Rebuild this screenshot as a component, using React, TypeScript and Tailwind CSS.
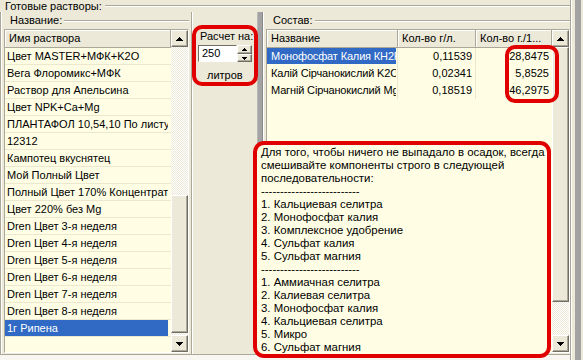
import React from "react";

const listItems = [
  "Цвет MASTER+МФК+K2O",
  "Вега Флоромикс+МФК",
  "Раствор для Апельсина",
  "Цвет NPK+Ca+Mg",
  "ПЛАНТАФОЛ 10,54,10 По листу",
  "12312",
  "Кампотец вкуснятец",
  "Мой Полный Цвет",
  "Полный Цвет 170% Концентрат",
  "Цвет 220% без Mg",
  "Dren Цвет 3-я неделя",
  "Dren Цвет 4-я неделя",
  "Dren Цвет 5-я неделя",
  "Dren Цвет 6-я неделя",
  "Dren Цвет 7-я неделя",
  "Dren Цвет 8-я неделя",
  "1г Рипена",
];

const rows = [
  { name: "Монофосфат Калия КН2РО4", a: "0,11539", b: "28,8475" },
  { name: "Калій Сірчанокислий K2O", a: "0,02341", b: "5,8525" },
  { name: "Магній Сірчанокислий Mg", a: "0,18519", b: "46,2975" },
];

const tip = `Для того, чтобы ничего не выпадало в осадок, всегда
смешивайте компоненты строго в следующей
последовательности:
--------------------------
1. Кальциевая селитра
2. Монофосфат калия
3. Комплексное удобрение
4. Сульфат калия
5. Сульфат магния
--------------------------
1. Аммиачная селитра
2. Калиевая селитра
3. Монофосфат калия
4. Кальциевая селитра
5. Микро
6. Сульфат магния`;

function Arrow({ dir, w = 7 }: { dir: "up" | "down"; w?: number }) {
  const h = Math.ceil(w / 2);
  return (
    <svg width={w} height={h} viewBox={`0 0 ${w} ${h}`} shapeRendering="crispEdges">
      <polygon
        points={dir === "up" ? `0,${h} ${w / 2},0 ${w},${h}` : `0,0 ${w},0 ${w / 2},${h}`}
        fill="#000"
      />
    </svg>
  );
}

const raised =
  "bg-[#ece9d8] border border-t-white border-l-white border-r-[#716f64] border-b-[#716f64] shadow-[inset_-1px_-1px_0_#aca899]";
const dither =
  "[background-image:repeating-conic-gradient(#ffffff_0%_25%,#ece9d8_0%_50%)] [background-size:2px_2px]";

function SBtn({ dir }: { dir: "up" | "down" }) {
  return (
    <div className={`h-[17px] shrink-0 flex items-center justify-center ${raised}`}>
      <Arrow dir={dir} />
    </div>
  );
}

function Header({ children, w, grow }: { children: React.ReactNode; w?: string; grow?: boolean }) {
  return (
    <div
      className={`${w ?? ""} ${grow ? "flex-1" : "shrink-0"} h-[18px] leading-[17px] pl-[4px] bg-[#ece9d8] border-r border-b border-r-[#aca899] border-b-[#aca899] shadow-[inset_1px_1px_0_#fff] whitespace-nowrap overflow-hidden`}
    >
      {children}
    </div>
  );
}

function GroupLabel({ text, pl }: { text: string; pl: string }) {
  return (
    <div className="h-[17px] shrink-0 flex items-center">
      <span className={`${pl} pr-[2px] leading-[13px] whitespace-nowrap`}>{text}</span>
      <div className="flex-1 h-[2px] border-t border-t-[#aca899] border-b border-b-white" />
    </div>
  );
}

export default function App() {
  return (
    <div className="relative w-[583px] h-[360px] overflow-hidden bg-[#ece9d8] text-[11px] text-black font-['Liberation_Sans',Arial,sans-serif] flex">
      <div className="w-[570px] flex flex-col">
        {/* title */}
        <div className="h-[12px] shrink-0 flex items-start">
          <span className="pl-[5px] pr-[3px] leading-[12px] whitespace-nowrap">Готовые растворы:</span>
          <div className="flex-1 mt-[5px] h-[2px] border-t border-t-[#aca899] border-b border-b-white" />
        </div>

        {/* body */}
        <div className="h-[342px] shrink-0 flex border-l border-l-[#aca899]">
          {/* left group */}
          <div className="w-[190px] shrink-0 flex flex-col pl-[3px] pr-[2px] shadow-[inset_1px_0_0_#fff]">
            <GroupLabel text="Название:" pl="pl-[6px]" />
            <div className="h-[324px] flex border border-t-[#aca899] border-l-[#aca899] border-b-white border-r-white shadow-[inset_1px_1px_0_#716f64]">
              <div className="w-[166px] shrink-0 flex flex-col bg-[#fffee4]">
                <div className="flex">
                  <Header grow>Имя раствора</Header>
                </div>
                {listItems.map((t, i) => {
                  const sel = i === listItems.length - 1;
                  return (
                    <div key={i} className="h-[17px] shrink-0 border-b border-b-[#ece8d0] pr-[3px]">
                      <div
                        className={`h-[16px] leading-[17px] pl-[2px] whitespace-nowrap overflow-hidden ${
                          sel ? "bg-[#316ac5] text-white" : ""
                        }`}
                      >
                        {t}
                      </div>
                    </div>
                  );
                })}
              </div>
              <div className="w-[17px] shrink-0 flex flex-col">
                <SBtn dir="up" />
                <div className={`h-[148px] shrink-0 ${dither}`} />
                <div className={`h-[138px] shrink-0 ${raised}`} />
                <div className={`h-[2px] shrink-0 ${dither}`} />
                <SBtn dir="down" />
              </div>
            </div>
          </div>

          {/* middle */}
          <div className="w-[66px] shrink-0 flex flex-col border-l border-l-[#aca899] shadow-[inset_1px_0_0_#fff]">
            <div className="mt-[18px] pl-[8px] leading-[13px] whitespace-nowrap">Расчет на:</div>
            <div className="mt-[2px] ml-[6px] flex h-[17px]">
              <div className="w-[39px] h-[17px] bg-white border border-t-[#716f64] border-l-[#716f64] border-b-white border-r-white leading-[15px] pl-[3px]">
                250
              </div>
              <div className="w-[15px] flex flex-col">
                <div className={`h-[9px] flex items-center justify-center ${raised}`}>
                  <Arrow dir="up" w={5} />
                </div>
                <div className={`h-[8px] flex items-center justify-center ${raised}`}>
                  <Arrow dir="down" w={5} />
                </div>
              </div>
            </div>
            <div className="mt-[7px] pl-[15px] leading-[12px] whitespace-nowrap">литров</div>
          </div>

          {/* splitter */}
          <div className="w-[6px] shrink-0 bg-[#a3a3a3] border-l border-r border-l-[#b8b8b8] border-r-[#8a8a8a]" />

          {/* right group */}
          <div className="w-[307px] shrink-0 flex flex-col pl-[3px] shadow-[inset_1px_0_0_#fff]">
            <GroupLabel text="Состав:" pl="pl-[7px]" />
            <div className="h-[324px] flex border border-t-[#aca899] border-l-[#aca899] border-b-white border-r-white shadow-[inset_1px_1px_0_#716f64]">
              <div className="w-[285px] shrink-0 flex flex-col bg-[#fffee4]">
                <div className="flex">
                  <Header w="w-[131px]">Название</Header>
                  <Header w="w-[78px]">Кол-во г/л.</Header>
                  <Header grow>Кол-во г./1...</Header>
                </div>
                {rows.map((r, i) => (
                  <div key={i} className="h-[17px] shrink-0 flex">
                    <div className="w-[131px] shrink-0 pr-[1px] border-r border-r-[#ece8d0]">
                      <div
                        className={`h-[16px] leading-[17px] pl-[4px] whitespace-nowrap overflow-hidden tracking-[-0.15px] ${
                          i === 0 ? "bg-[#316ac5] text-white" : ""
                        }`}
                      >
                        {r.name}
                      </div>
                    </div>
                    <div className="w-[78px] shrink-0 text-right pr-[3px] leading-[17px] border-r border-r-[#ece8d0]">
                      {r.a}
                    </div>
                    <div className="flex-1 text-right pr-[3px] leading-[17px]">{r.b}</div>
                  </div>
                ))}
              </div>
              <div className="w-[17px] shrink-0 flex flex-col">
                <SBtn dir="up" />
                <div className={`h-[255px] shrink-0 ${raised}`} />
                <div className={`h-[33px] shrink-0 ${dither}`} />
                <SBtn dir="down" />
              </div>
            </div>
          </div>
        </div>

        {/* bottom */}
        <div className="flex-1 border-t border-t-[#aca899] bg-[#f7f6f0]" />
      </div>

      {/* right strip */}
      <div className="w-[13px] shrink-0 flex">
        <div className="w-[1px] bg-[#aca899]" />
        <div className="w-[1px] bg-white" />
        <div className="w-[3px] bg-[#ece9d8]" />
        <div className="w-[6px] bg-[#a3a3a3]" />
        <div className="w-[2px] bg-[#ece9d8]" />
      </div>

      {/* annotations / tooltip overlays */}
      <div className="absolute left-[192px] top-[25px] w-[66px] h-[61px] border-[4px] border-[#e00000] rounded-[10px]" />
      <div className="absolute left-[505px] top-[45px] w-[54px] h-[58px] border-[4px] border-[#e00000] rounded-[10px]" />
      <div className="absolute left-[253px] top-[141px] w-[298px] h-[217px] border-[4px] border-[#e00000] rounded-[11px] bg-[#fffee4] pl-[4px] pt-[1px]">
        <div className="whitespace-pre leading-[13px] text-[11.4px]">{tip}</div>
      </div>
    </div>
  );
}
